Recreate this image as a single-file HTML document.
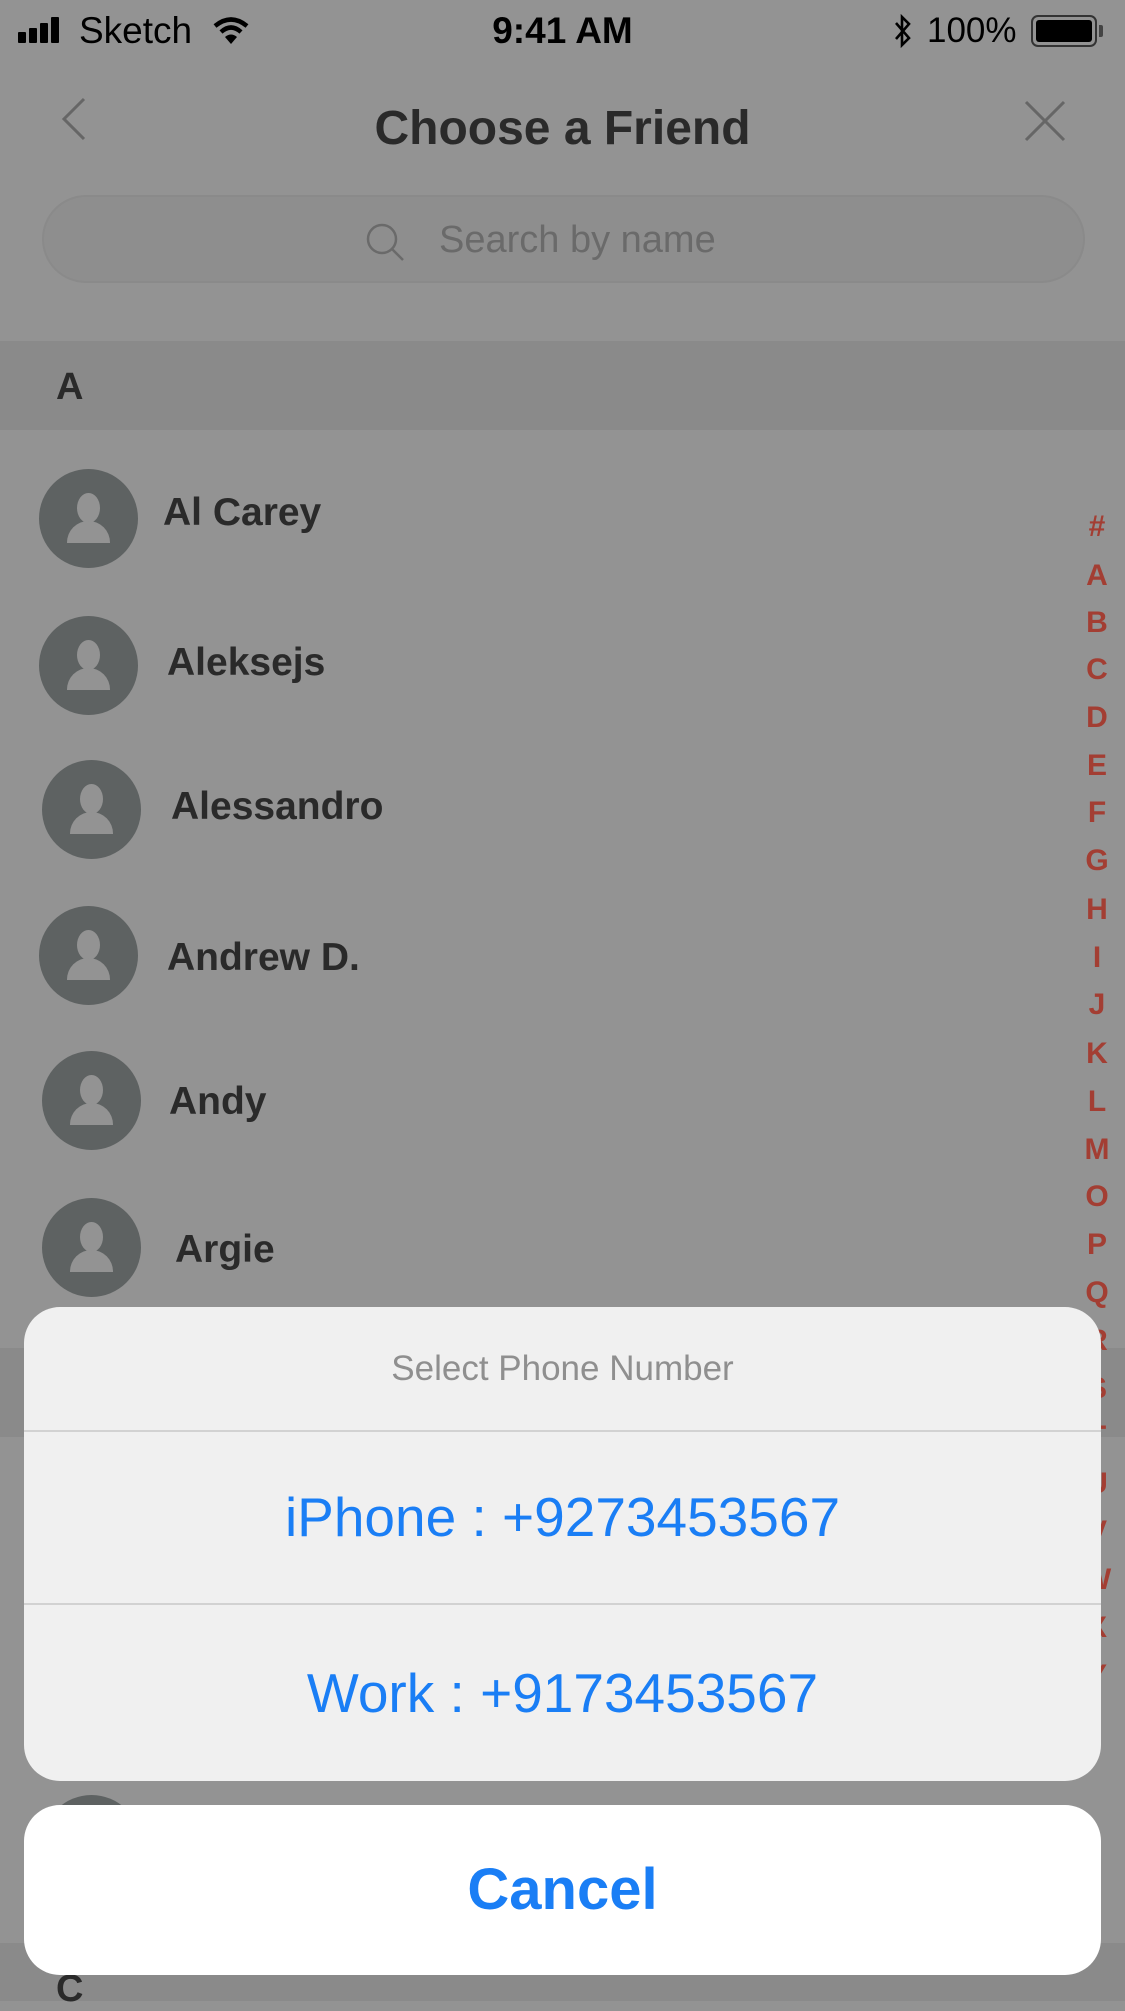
<!DOCTYPE html>
<html><head><meta charset="utf-8"><style>
*{margin:0;padding:0;box-sizing:border-box}
body{width:1125px;height:2001px;overflow:hidden;background:#939393;font-family:"Liberation Sans",sans-serif;position:relative}
.a{position:absolute}
.av{position:absolute;width:99px;height:99px;border-radius:50%;background:#5e6262;overflow:hidden}
.av:before{content:"";position:absolute;left:38px;top:24px;width:23px;height:30px;border-radius:50%;background:#939393}
.av:after{content:"";position:absolute;left:28px;top:52px;width:43px;height:22px;border-radius:22px 22px 0 0;background:#939393}
.nm{position:absolute;font-weight:bold;font-size:39px;color:#2a2a2a;line-height:1}
.idx{position:absolute;left:1082px;width:30px;text-align:center;color:#a33e33;font-size:30px;font-weight:bold;line-height:1}
</style></head><body>
<!-- status bar -->
<div class="a" style="left:18px;top:17px;display:flex;align-items:flex-end;gap:3px">
<div style="width:8px;height:11px;background:#000;border-radius:1px"></div>
<div style="width:8px;height:15px;background:#000;border-radius:1px"></div>
<div style="width:8px;height:20px;background:#000;border-radius:1px"></div>
<div style="width:8px;height:26px;background:#000;border-radius:1px"></div>
</div>
<div class="a" style="left:79px;top:10px;font-size:37px;color:#000">Sketch</div>
<svg class="a" style="left:213px;top:16px" width="36" height="30" viewBox="0 0 36 30"><path d="M2 10 Q18 -3 34 10" stroke="#000" stroke-width="4.5" fill="none"/><path d="M8 16 Q18 7 28 16" stroke="#000" stroke-width="4.5" fill="none"/><path d="M12 21 L18 28 L24 21 Q18 16 12 21Z" fill="#000"/></svg>
<div class="a" style="left:0;width:1125px;top:10px;text-align:center;font-size:37px;font-weight:bold;color:#000">9:41 AM</div>
<svg class="a" style="left:893px;top:14px" width="20" height="34" viewBox="0 0 20 34"><path d="M3 9 L16 24 L9 31 L9 3 L16 10 L3 25" stroke="#000" stroke-width="2.6" fill="none"/></svg>
<div class="a" style="left:927px;top:11px;font-size:35px;color:#000">100%</div>
<div class="a" style="left:1031px;top:15px;width:66px;height:32px;border:2.5px solid #333;border-radius:7px;padding:3px"><div style="width:100%;height:100%;background:#000;border-radius:3px"></div></div>
<div class="a" style="left:1099px;top:25px;width:4px;height:12px;background:#444;border-radius:0 2px 2px 0"></div>
<!-- nav -->
<svg class="a" style="left:58px;top:96px" width="34" height="46" viewBox="0 0 34 46"><path d="M26 3 L6 23 L26 43" stroke="#666" stroke-width="3" fill="none"/></svg>
<svg class="a" style="left:1022px;top:100px" width="46" height="42" viewBox="0 0 46 42"><path d="M4 2 L42 40 M42 2 L4 40" stroke="#666" stroke-width="3" fill="none"/></svg>
<div class="a" style="left:0;width:1125px;top:101px;text-align:center;font-size:48px;font-weight:bold;color:#2a2a2a">Choose a Friend</div>
<!-- search -->
<div class="a" style="left:42px;top:195px;width:1043px;height:88px;border-radius:44px;background:#8e8e8e;border:2px solid #8a8a8a"></div>
<svg class="a" style="left:365px;top:222px" width="42" height="42" viewBox="0 0 42 42"><circle cx="17" cy="17" r="14" stroke="#6a6a6a" stroke-width="2.5" fill="none"/><path d="M27 27 L38 38" stroke="#6a6a6a" stroke-width="2.5"/></svg>
<div class="a" style="left:439px;top:219px;font-size:38px;color:#6a6a6a">Search by name</div>
<!-- section A -->
<div class="a" style="left:0;top:341px;width:1125px;height:89px;background:#8a8a8a"></div>
<div class="a" style="left:56px;top:366px;font-size:38px;font-weight:bold;color:#2a2a2a">A</div>
<!-- rows -->
<div class="av" style="left:39px;top:469px"></div><div class="nm" style="left:163px;top:493px">Al Carey</div>
<div class="av" style="left:39px;top:616px"></div><div class="nm" style="left:167px;top:643px">Aleksejs</div>
<div class="av" style="left:42px;top:760px"></div><div class="nm" style="left:171px;top:787px">Alessandro</div>
<div class="av" style="left:39px;top:906px"></div><div class="nm" style="left:167px;top:938px">Andrew D.</div>
<div class="av" style="left:42px;top:1051px"></div><div class="nm" style="left:169px;top:1082px">Andy</div>
<div class="av" style="left:42px;top:1198px"></div><div class="nm" style="left:175px;top:1230px">Argie</div>
<div class="a" style="left:0;top:1348px;width:1125px;height:89px;background:#8a8a8a"></div>
<div class="av" style="left:42px;top:1795px"></div>
<div class="a" style="left:0;top:1943px;width:1125px;height:58px;background:#8a8a8a"></div>
<div class="a" style="left:56px;top:1968px;font-size:38px;font-weight:bold;color:#2a2a2a">C</div>
<!-- index -->
<div class="idx" style="top:512px">#</div><div class="idx" style="top:561px">A</div><div class="idx" style="top:608px">B</div><div class="idx" style="top:655px">C</div><div class="idx" style="top:703px">D</div><div class="idx" style="top:751px">E</div><div class="idx" style="top:798px">F</div><div class="idx" style="top:846px">G</div><div class="idx" style="top:895px">H</div><div class="idx" style="top:943px">I</div><div class="idx" style="top:990px">J</div><div class="idx" style="top:1039px">K</div><div class="idx" style="top:1087px">L</div><div class="idx" style="top:1135px">M</div><div class="idx" style="top:1182px">O</div><div class="idx" style="top:1230px">P</div><div class="idx" style="top:1278px">Q</div><div class="idx" style="top:1326px">R</div><div class="idx" style="top:1374px">S</div><div class="idx" style="top:1422px">T</div><div class="idx" style="top:1469px">U</div><div class="idx" style="top:1517px">V</div><div class="idx" style="top:1565px">W</div><div class="idx" style="top:1613px">X</div><div class="idx" style="top:1661px">Y</div>
<!-- sheet -->
<div class="a" style="left:24px;top:1307px;width:1077px;height:474px;border-radius:36px;background:#f0f0f0;overflow:hidden">
<div style="height:123px;line-height:123px;text-align:center;font-size:35px;color:#8f8f8f">Select Phone Number</div>
<div style="height:2px;background:#d2d2d2"></div>
<div style="height:171px;line-height:171px;text-align:center;font-size:55px;color:#1a7ef5">iPhone : +9273453567</div>
<div style="height:2px;background:#d2d2d2"></div>
<div style="height:176px;line-height:176px;text-align:center;font-size:55px;color:#1a7ef5">Work : +9173453567</div>
</div>
<div class="a" style="left:24px;top:1805px;width:1077px;height:170px;border-radius:36px;background:#fff;line-height:170px;text-align:center;font-size:58px;font-weight:bold;color:#1a7ef5">Cancel</div>
</body></html>
